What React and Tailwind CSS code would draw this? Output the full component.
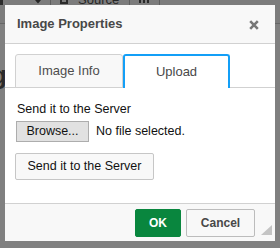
import React from "react";

export default function App() {
  return (
    <div className="relative w-[280px] h-[248px] overflow-hidden bg-[#808080] font-['Liberation_Sans',Arial,sans-serif]">
      {/* editor toolbar behind the overlay (only its lower edge shows) */}
      <div className="absolute left-0 top-0 w-full h-[24px] bg-[#7c7c7c] border-b border-[#666666]">
        <div className="flex items-start h-full">
          <div className="w-[3px] h-[5px] bg-[#2c2c2c]" />
          <svg width="6" height="4" viewBox="0 0 6 4" className="ml-[32px]">
            <path d="M0 0 L6 0 L3 3.5 Z" fill="#262626" />
          </svg>
          <div className="ml-[9px] w-px h-[5px] bg-[#5e5e5e]" />
          <div className="ml-[9px] w-[8px] h-[4px] border-x-2 border-b-2 border-[#2a2a2a]" />
          <span className="ml-[10px] -mt-[7px] text-[13px] leading-[13px] text-[#262626]">Source</span>
          <div className="ml-[10px] w-px h-[5px] bg-[#5e5e5e]" />
          <div className="ml-[9px] flex gap-[2px]">
            <div className="w-[2px] h-[3px] bg-[#2a2a2a]" />
            <div className="w-[2px] h-[3px] bg-[#2a2a2a]" />
            <div className="w-[2px] h-[3px] bg-[#2a2a2a]" />
          </div>
          <div className="ml-[10px] w-px h-[5px] bg-[#5e5e5e]" />
        </div>
      </div>
      {/* editor content glyph peeking at the left */}
      <div className="absolute left-[-9px] top-[62px] text-[26px] leading-[26px] font-bold text-[#2b2b2b]">g</div>

      <div className="relative pt-[5px] pl-[5px]">
        <div className="w-[270px] h-[236px] bg-white flex flex-col">
          {/* title bar */}
          <div className="h-[39px] shrink-0 bg-[#f8f8f8] border-b border-[#d1d1d1] flex items-center justify-between pl-[12px] pr-[16px]">
            <span className="text-[13px] font-bold text-[#484848] leading-[16px]">Image Properties</span>
            <svg width="10" height="10" viewBox="0 0 10 10" className="mt-[1px]">
              <path d="M1.2 1.2 L8.8 8.8 M8.8 1.2 L1.2 8.8" stroke="#767676" strokeWidth="2.6" strokeLinecap="butt" />
            </svg>
          </div>

          {/* body */}
          <div className="flex-1 flex flex-col pt-[10px]">
            <div className="h-[34px] shrink-0 flex items-end border-b border-[#d1d1d1] px-[10px]">
              <div className="w-[108px] h-[34px] -mb-px bg-[#f8f8f8] border border-[#d1d1d1] rounded-t-[3px] flex items-center justify-center text-[13px] text-[#4d4d4d]">
                Image Info
              </div>
              <div className="w-[107px] h-[34px] -mb-px bg-white border-2 border-b-0 border-[#139ff7] rounded-t-[3px] flex items-center justify-center text-[13px] text-[#484848] pb-[1px]">
                Upload
              </div>
            </div>

            <div className="flex flex-col pl-[10px] pt-[14px] text-[12.5px] text-[#111111]">
              <div className="pl-[2px] leading-[15px]">Send it to the Server</div>
              <div className="mt-[4px] h-[21px] flex items-center pl-[1px]">
                <div className="w-[73px] h-[21px] bg-[#e1e1e1] border border-[#adadad] flex items-center justify-center">
                  Browse...
                </div>
                <span className="ml-[7px]">No file selected.</span>
              </div>
              <div className="mt-[11px] w-[139px] h-[27px] bg-[#f8f8f8] border border-[#c6c6c6] rounded-[2px] flex items-center justify-center">
                Send it to the Server
              </div>
            </div>
          </div>

          {/* footer */}
          <div className="relative h-[38px] shrink-0 bg-[#f8f8f8] border-t border-[#d1d1d1] flex items-start justify-end gap-[5px] pt-[5px] pr-[20px]">
            <div className="w-[46px] h-[28px] bg-[#09863e] border border-[#09863e] rounded-[2px] flex items-center justify-center text-[12px] font-bold text-white">
              OK
            </div>
            <div className="w-[69px] h-[28px] bg-[#f8f8f8] border border-[#bcbcbc] rounded-[2px] flex items-center justify-center text-[12px] font-bold text-[#484848]">
              Cancel
            </div>
            <svg width="11" height="10" viewBox="0 0 11 10" className="absolute right-[3px] bottom-[6px]">
              <path d="M11 0 L11 10 L0 10 Z" fill="#c4c4c4" />
            </svg>
          </div>
        </div>
      </div>
    </div>
  );
}
